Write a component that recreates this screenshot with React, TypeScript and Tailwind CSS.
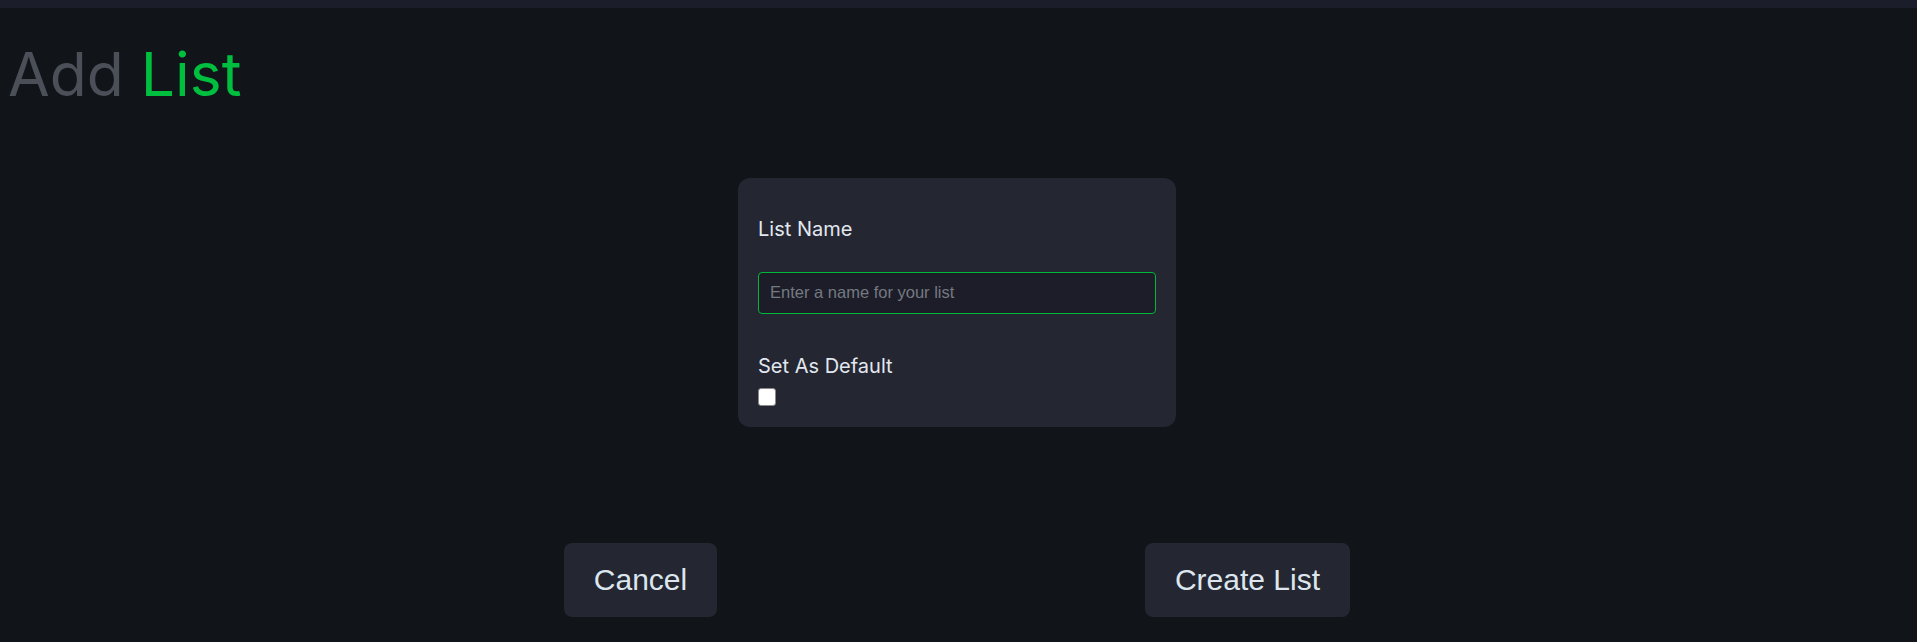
export default function App() {
  return (
    <div className="min-h-[642px] bg-[#111419] font-['Inter',sans-serif]">
      <div className="h-2 bg-[#1b1d2b]" />

      <h1 className="px-2 pt-[36px] text-[60.5px] leading-none font-normal">
        <span className="text-[#4b4f58]">Add </span>
        <span className="text-[#00bf3f]">List</span>
      </h1>

      <div className="pr-[3px]">
        <div className="mx-auto mt-[73px] w-[438px] rounded-xl bg-[#242631] px-5 pt-[37px] pb-[21px]">
          <label className="block text-xl leading-7 text-[#e2e8f0]">List Name</label>
          <input
            type="text"
            placeholder="Enter a name for your list"
            className="mt-[29px] block h-[42px] w-full rounded border border-[#00b83a] bg-[#1c1d29] px-[11px] font-['Liberation_Sans',Arial,sans-serif] text-[16.5px] text-[#e2e8f0] placeholder:text-[#757a80] outline-none"
          />
          <label className="mt-[38px] block text-xl leading-7 text-[#e2e8f0]">Set As Default</label>
          <input
            type="checkbox"
            className="mt-2 block h-[18px] w-[18px] appearance-none rounded-[3px] border border-[#8a8a8a] bg-white"
          />
        </div>

        <div className="mx-auto mt-[116px] flex w-[786px] justify-between font-['Liberation_Sans',Arial,sans-serif]">
          <button className="h-[74px] w-[153px] rounded-lg bg-[#242631] text-[30px] text-[#dde6ee]">
            Cancel
          </button>
          <button className="h-[74px] w-[205px] rounded-lg bg-[#242631] text-[30px] text-[#dde6ee]">
            Create List
          </button>
        </div>
      </div>
    </div>
  );
}
